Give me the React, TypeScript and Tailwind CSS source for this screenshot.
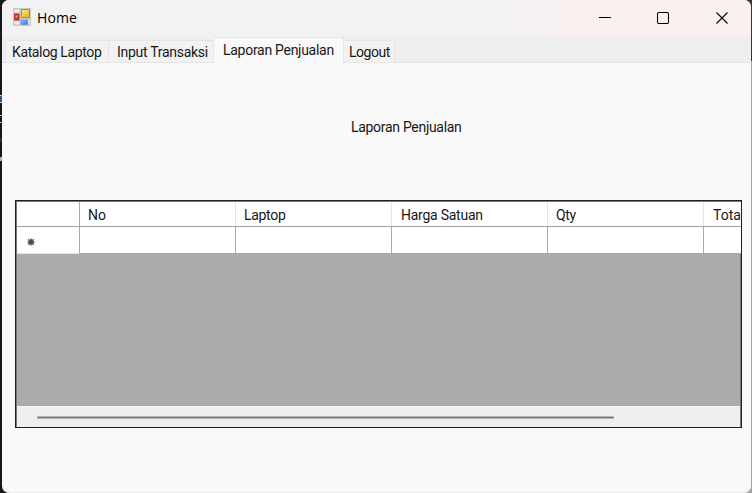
import React from 'react';

const columns = [
  { label: 'No', style: 'pl-[8px] tracking-[-0.1px]' },
  { label: 'Laptop', style: 'pl-[8px] tracking-[-0.3px]' },
  { label: 'Harga Satuan', style: 'pl-[9px] tracking-[-0.25px]' },
  { label: 'Qty', style: 'pl-[8px] tracking-[-0.3px]' },
  { label: 'Total', style: 'pl-[9px] tracking-[0px]' },
];

function AppIcon() {
  return (
    <svg width="18" height="18" viewBox="0 0 18 18">
      <defs>
        <linearGradient id="gold" x1="0" y1="0" x2="1" y2="1">
          <stop offset="0" stopColor="#ffeb9a" />
          <stop offset="1" stopColor="#e9b000" />
        </linearGradient>
        <linearGradient id="blue" x1="0" y1="0" x2="1" y2="1">
          <stop offset="0" stopColor="#9cc5ff" />
          <stop offset="1" stopColor="#3470d8" />
        </linearGradient>
      </defs>
      <path d="M0 0h18v18H0z" fill="#c9c9c9" />
      <path d="M1.5 1.5h5v3h-5zM1.5 13.5h5v3h-5zM15.5 12h1.5v4.500h-1.500z" fill="#efefef" />
      <path d="M1 5.500h5.500v7H1z" fill="#c4362d" />
      <path d="M2.500 7.500h2v2h-2z" fill="#ee9c92" />
      <path d="M8.500 1.500h8v8h-8z" fill="url(#gold)" stroke="#bd8b16" />
      <path d="M8 12h6.500v4.500H8z" fill="url(#blue)" stroke="#5688d6" strokeWidth=".6" />
    </svg>
  );
}

function Tab({ children, className }: { children: string; className: string }) {
  return (
    <div className={`h-[22px] shrink-0 whitespace-nowrap border-t border-r border-[#e5e5e5] bg-[#f2f2f2] leading-[22px] ${className}`}>
      {children}
    </div>
  );
}

function DesktopEdge() {
  return (
    <div className="flex h-[493px] w-[2px] shrink-0 flex-col bg-[#18181b]">
      <div className="mt-[95px] h-[8px] border-y border-[#c9c9c9] bg-[#33557a]" />
      <div className="mt-[12px] h-[8px] border-y border-[#bbb]" />
      <div className="mt-[15px] h-[4px] bg-[#521d24]" />
      <div className="mt-[15px] h-[4px] bg-[#b7a9c9]" />
    </div>
  );
}

export default function App() {
  return (
    <div className="flex h-[493px] w-[752px] overflow-hidden bg-[linear-gradient(90deg,#18181b_0_50%,transparent_50%),linear-gradient(#353535_0_61px,#a5a5a5_61px)] font-['Roboto',sans-serif] text-[14px] text-[#171717]">
      <DesktopEdge />
      <div className="flex h-[493px] w-[749px] flex-col overflow-hidden rounded-[7px] border-b border-[#ececec] bg-[#f9f9f9]">
        <header className="flex h-[37px] shrink-0 items-start bg-[linear-gradient(90deg,#f2f2f2_0,#f3f2f2_65%,#f9f0ef_80%)]">
          <div className="ml-[11px] mt-[8px]"><AppIcon /></div>
          <h1 className="ml-[6px] mt-[8px] font-['Open_Sans',sans-serif] text-[14px] leading-5 tracking-[0.1px] text-black">Home</h1>
          <svg className="ml-auto mr-[22px] mt-[11px]" width="130" height="14" fill="none" stroke="#000" strokeWidth="1.1">
            <path d="M0 6.500h12" />
            <rect x="58.500" y="1.500" width="11" height="11" rx="1.200" />
            <path d="m117.500 1.500 11 11m0-11-11 11" />
          </svg>
        </header>
        <nav className="flex h-[26px] shrink-0 items-end border-b border-[#e5e5e5] bg-[#efefef] pl-[3px]">
          <Tab className="w-[104px] border-l pl-[6px] tracking-[-0.37px]">Katalog Laptop</Tab>
          <Tab className="w-[105px] pl-[8px] tracking-[-0.28px]">Input Transaksi</Tab>
          <div className="-mb-px h-[26px] w-[130px] shrink-0 whitespace-nowrap border-t border-r border-[#e5e5e5] bg-[#f9f9f9] pl-[9px] leading-[24px] tracking-[-0.28px]">
            Laporan Penjualan
          </div>
          <Tab className="w-[51px] pl-[5px] tracking-[-0.45px]">Logout</Tab>
        </nav>
        <main className="flex flex-col">
          <h2 className="ml-[349px] mt-[54px] h-5 whitespace-nowrap leading-5 tracking-[-0.3px]">Laporan Penjualan</h2>
          <section className="ml-[13px] mt-[63px] flex h-[228px] w-[727px] flex-col overflow-hidden border border-[#202020] bg-[#ababab] shadow-[inset_0_0_0_1px_#777]">
            <div className="ml-px mt-px flex h-[25px] shrink-0 overflow-hidden border-b border-[#a0a0a0] bg-white">
              <div className="w-[63px] shrink-0 border-r border-[#aaa]" />
              {columns.map((column) => (
                <div key={column.label} className={`w-[156px] shrink-0 border-r border-[#e5e5e5] leading-[26px] ${column.style}`}>
                  {column.label}
                </div>
              ))}
            </div>
            <div className="ml-px flex h-[27px] shrink-0 overflow-hidden bg-white">
              <div className="flex w-[63px] shrink-0 items-center border-r border-b border-r-[#aaa] border-b-[#e3e3e3] pl-[10px]">
                <svg className="mt-1" width="8" height="8" viewBox="0 0 8 8" stroke="#666" strokeWidth="1.500">
                  <path d="M4 .5v7M.5 4h7M1.200 1.200l5.600 5.600M6.800 1.200 1.200 6.800" />
                  <circle cx="4" cy="4" r="1.800" fill="#444" stroke="#505050" />
                </svg>
              </div>
              {columns.map((column) => (
                <div key={column.label} className="w-[156px] shrink-0 border-r border-b border-[#a8a8a8]" />
              ))}
            </div>
            <div className="mx-px mt-auto flex h-[21px] shrink-0 items-center border-t border-[#f8f8f8] bg-[#efefef] pl-[20px]">
              <div className="h-[3px] w-[577px] rounded-full border-y border-[#b5b5b5] bg-[#777]" />
            </div>
          </section>
        </main>
      </div>
    </div>
  );
}
